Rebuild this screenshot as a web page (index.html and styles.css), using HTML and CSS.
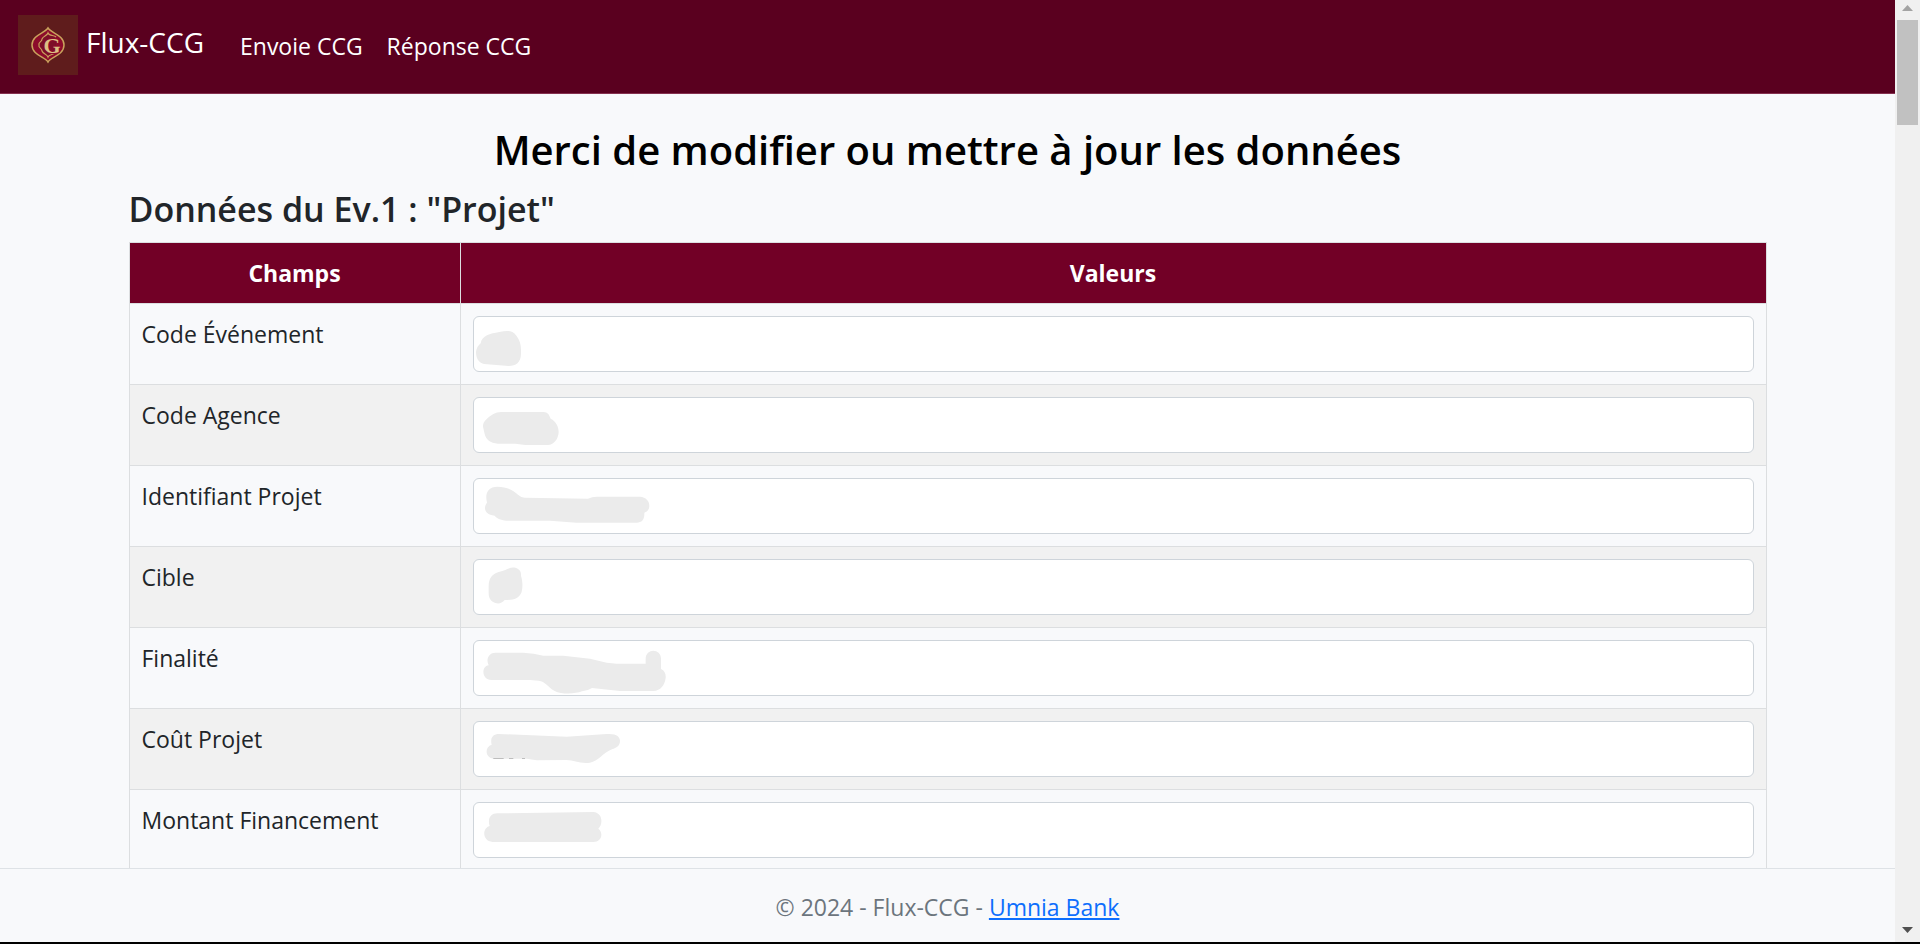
FILE: index.html
```html
<!DOCTYPE html>
<html lang="fr">
<head>
<meta charset="utf-8">
<title>Flux-CCG</title>
<link rel="stylesheet" href="styles.css">
</head>
<body>
<div class="window">
  <div class="page">
    <header class="navbar">
      <a class="brand" href="#">
        <svg class="brand-logo" viewBox="0 0 60 60" aria-hidden="true">
          <rect width="60" height="60" fill="#5f1c1c"/>
          <path d="M30 13C33 18 46 20 46 30S33 42 30 47C27 42 14 40 14 30S27 18 30 13Z" fill="#8c0b2b" stroke="#c9a25c" stroke-width="1.500"/>
          <path d="M38 22C36 20 31 21 30 18C29 21 25 21 24 24C24 27 20 27 21 30C20 33 24 33 24 36C25 39 29 39 30 42C31 39 36 40 38 37" fill="#7c0f28" stroke="#c9a25c" stroke-width="1.200"/>
          <text class="logo-letter" x="34" y="38" text-anchor="middle">G</text>
        </svg>
        <span>Flux-CCG</span>
      </a>
      <nav class="nav">
        <a href="#">Envoie CCG</a>
        <a href="#">Réponse CCG</a>
      </nav>
    </header>

    <main class="content">
      <div class="container">
        <h2 class="title">Merci de modifier ou mettre à jour les données</h2>
        <h3 class="subtitle">Données du Ev.1 : "Projet"</h3>
        <table class="table">
          <thead>
            <tr><th class="col-field" scope="col">Champs</th><th scope="col">Valeurs</th></tr>
          </thead>
          <tbody>
            <tr>
              <td><label for="f1">Code Événement</label></td>
              <td><div class="field"><input id="f1" type="text">
                <svg class="mask" viewBox="39 18 720 168" aria-hidden="true"><path d="M62 100C66 76 90 71 118 66C140 62 156 60 168 76C180 92 184 104 183 132C182 158 168 168 146 168L72 162C54 158 48 142 48 126C49 114 55 106 62 100Z"/></svg></div></td>
            </tr>
            <tr>
              <td><label for="f2">Code Agence</label></td>
              <td><div class="field"><input id="f2" type="text">
                <svg class="mask" viewBox="39 261 720 168" aria-hidden="true"><path d="M69 350C68 334 84 322 100 312Q110 306 124 306H250C264 306 268 316 272 326C288 334 296 350 296 366C295 390 280 404 264 405H196L166 401H114C90 400 78 388 74 372Z"/></svg></div></td>
            </tr>
            <tr>
              <td><label for="f3">Identifiant Projet</label></td>
              <td><div class="field"><input id="f3" type="text">
                <svg class="mask" viewBox="39 504 720 168" aria-hidden="true"><path d="M81 578C74 550 84 530 112 530C140 530 160 540 174 554Q184 563 194 563L384 566Q396 560 410 560H540C558 562 568 572 568 587C568 600 560 606 553 608C554 628 546 638 530 638H350L270 632H140C120 630 110 625 104 617C84 615 75 606 75 594C75 586 78 582 81 578Z"/></svg></div></td>
            </tr>
            <tr>
              <td><label for="f4">Cible</label></td>
              <td><div class="field"><input id="f4" type="text">
                <svg class="mask" viewBox="39 747 720 168" aria-hidden="true"><path d="M86 828C86 804 98 792 114 787L134 781C146 774 156 771 166 773C180 777 184 786 183 798C188 812 189 834 184 848C176 866 160 870 134 870C126 880 116 882 106 879C92 875 86 864 86 850Z"/></svg></div></td>
            </tr>
            <tr>
              <td><label for="f5">Finalité</label></td>
              <td><div class="field"><input id="f5" type="text">
                <svg class="mask" viewBox="39 60 720 168" aria-hidden="true"><path d="M86 136C76 116 88 98 106 98H190Q222 99 250 107H310L390 116L440 128L470 131H557V116C557 84 603 84 603 116V147C614 152 618 162 617 174C614 196 602 212 580 213H480L396 204Q384 212 366 214C346 222 306 224 284 213C262 200 256 184 236 182L210 180H94C66 180 62 140 86 136Z"/></svg></div></td>
            </tr>
            <tr>
              <td><label for="f6">Coût Projet</label></td>
              <td><div class="field"><input id="f6" type="text">
                <svg class="mask" viewBox="39 303 720 168" aria-hidden="true"><path d="M95 374C90 354 98 342 118 342L320 350L440 342C470 340 480 350 480 364C479 378 470 384 456 388C430 398 414 424 390 428C360 432 342 420 320 420L230 421L200 416H100C74 412 74 380 95 374Z"/><path class="trace" d="M100 415.500H131M147 415.500H160M186 415.500H195"/></svg></div></td>
            </tr>
            <tr>
              <td><label for="f7">Montant Financement</label></td>
              <td><div class="field"><input id="f7" type="text">
                <svg class="mask" viewBox="39 546 720 168" aria-hidden="true"><path d="M89 618C82 596 92 580 112 580L400 576C428 578 430 612 415 626C432 640 424 666 400 666H98C66 664 66 624 89 618Z"/></svg></div></td>
            </tr>
          </tbody>
        </table>
      </div>
    </main>

    <footer class="footer">© 2024 - Flux-CCG - <a href="#">Umnia Bank</a></footer>
  </div>

  <div class="scrollbar" aria-hidden="true">
    <svg class="arrow" viewBox="0 0 11 6"><path d="M0 6L5.500 0L11 6Z" fill="#a3a3a3"/></svg>
    <div class="thumb"></div>
    <svg class="arrow arrow-down" viewBox="0 0 11 6"><path d="M0 0L5.500 6L11 0Z" fill="#505050"/></svg>
  </div>
</div>
</body>
</html>
```
FILE: styles.css
```css
* { box-sizing: border-box; }

body {
  margin: 0;
  font-family: "Segoe UI", "Open Sans", "Noto Sans", sans-serif;
  font-size: 23px;
  line-height: 36px;
  color: #212529;
  background: #f8f9fb;
}

.window {
  display: flex;
  height: 100vh;
  border-bottom: 2px solid #000;
}

.page {
  flex: 1;
  min-width: 0;
  display: flex;
  flex-direction: column;
}

.navbar {
  display: flex;
  align-items: center;
  gap: 36px;
  padding: 15px 18px 18px;
  background: #5a001f;
  border-bottom: 1px solid #84304f;
}

.brand {
  display: flex;
  gap: 8px;
  font-size: 28px;
  line-height: 54px;
  color: #fff;
  text-decoration: none;
}

.brand-logo { width: 60px; height: 60px; }

.logo-letter {
  font: bold 22px "Liberation Serif", serif;
  fill: #dcc084;
  stroke: #8c0b2b;
  stroke-width: 2px;
  paint-order: stroke;
}

.nav { display: flex; gap: 24px; padding-top: 2px; }

.nav a { color: #fff; text-decoration: none; }

.content {
  flex: 1;
  min-height: 0;
  overflow: hidden;
  padding: 30px 18px 0;
}

.container { max-width: 1638px; margin: 0 auto; }

.title {
  margin: 0 0 12px;
  font-size: 40px;
  line-height: 52px;
  font-weight: 600;
  text-align: center;
  color: #000;
}

.subtitle {
  margin: 0 0 12px;
  font-size: 34px;
  line-height: 42px;
  font-weight: 600;
}

.table {
  width: 100%;
  border-collapse: collapse;
  table-layout: fixed;
}

.col-field { width: 331px; }

.table th,
.table td {
  padding: 12px;
  border: 1px solid #dcdee0;
  vertical-align: top;
  text-align: left;
}

.table th {
  background: #720026;
  color: #fff;
  font-weight: 700;
  text-align: center;
}

.table tbody tr:nth-child(even) { background: #f1f1f1; }

.field { position: relative; }

.field input {
  display: block;
  width: 100%;
  height: 56px;
  padding: 9px 18px;
  font: inherit;
  color: inherit;
  background: #fff;
  border: 1px solid #ced4da;
  border-radius: 6px;
}

.mask {
  position: absolute;
  top: 0;
  left: 0;
  width: 240px;
  height: 56px;
  fill: #ebebeb;
  pointer-events: none;
}

.trace { fill: none; stroke: #bdbdbd; stroke-width: 3; }

.footer {
  padding: 20px 18px 17px;
  text-align: center;
  color: #6c757d;
  border-top: 1px solid #dee2e6;
}

.footer a { color: #0d6efd; }

.scrollbar {
  display: flex;
  flex-direction: column;
  align-items: center;
  width: 25px;
  padding: 5px 2px 9px;
  background: #f0f0f0;
}

.arrow { width: 11px; height: 6px; }

.thumb {
  width: 100%;
  height: 105px;
  margin-top: 9px;
  background: #c1c1c1;
}

.arrow-down { margin-top: auto; }
```
